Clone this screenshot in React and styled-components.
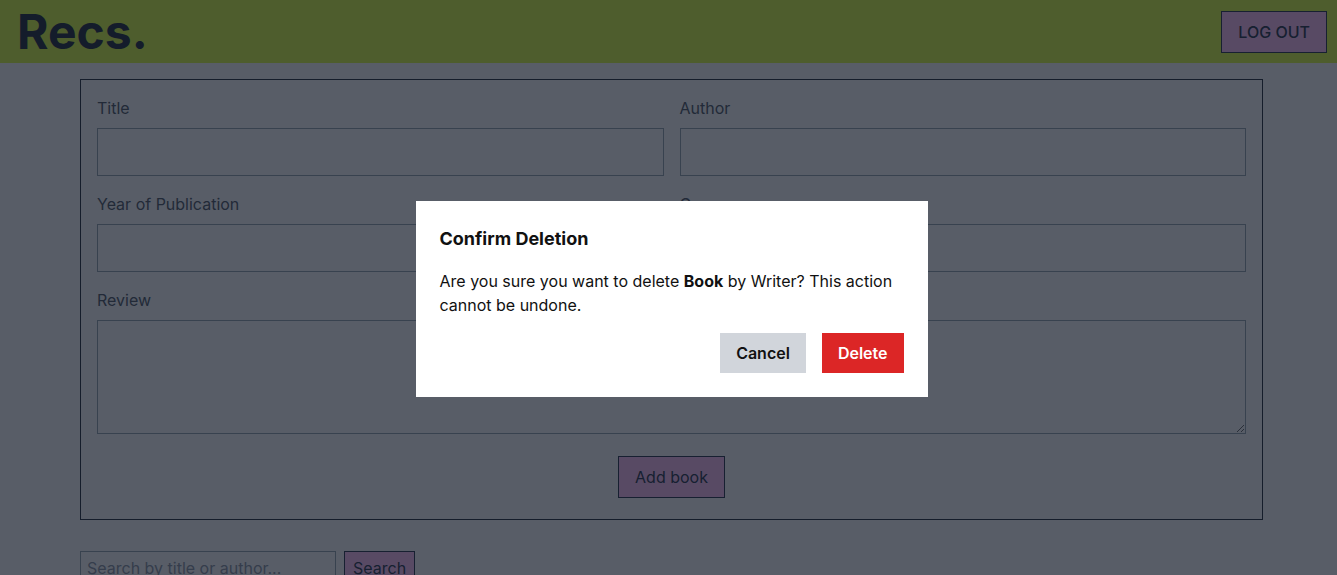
import styled, { createGlobalStyle } from 'styled-components';

const GlobalStyle = createGlobalStyle`
  body {
    margin: 0;
    font-family: Inter, "Noto Sans", sans-serif;
    background: #ffffff;
    color: #1f2937;
  }
  * {
    box-sizing: border-box;
  }
`;

const Header = styled.header`
  height: 63px;
  display: flex;
  justify-content: space-between;
  align-items: center;
  padding: 0 10px 0 17px;
  background: #dcff3c;
`;

const Logo = styled.h1`
  margin: 0;
  font-size: 48px;
  font-weight: 700;
  color: #1c2636;
  line-height: 1;
`;

const PillButton = styled.button`
  font-family: Inter, sans-serif;
  font-size: 16px;
  font-weight: ${(p) => (p.$caps ? 500 : 400)};
  text-transform: ${(p) => (p.$caps ? 'uppercase' : 'none')};
  color: #25324a;
  background: #ffc0f5;
  border: 1px solid #25324a;
  padding: ${(p) => p.$pad || '10px 16px'};
  line-height: 20px;
  cursor: pointer;
`;

const Main = styled.main`
  padding: 16px 74px 0 80px;
`;

const FormBox = styled.form`
  border: 1px solid #1f2937;
  padding: 16px 16px 21px;
  display: grid;
  grid-template-columns: 1fr 1fr;
  column-gap: 16px;
  row-gap: 16px;
`;

const Field = styled.div`
  display: flex;
  flex-direction: column;
  gap: 8px;
  grid-column: ${(p) => (p.$wide ? '1 / -1' : 'auto')};
`;

const Label = styled.label`
  font-size: 16px;
  line-height: 24px;
  color: #4b5563;
`;

const Input = styled.input`
  height: 48px;
  border: 1px solid #94a3ad;
  font-family: Inter, sans-serif;
  font-size: 16px;
  padding: 0 12px;
`;

const TextArea = styled.textarea`
  height: 114px;
  border: 1px solid #94a3ad;
  font-family: Inter, sans-serif;
  font-size: 16px;
  padding: 8px 12px;
  display: block;
`;

const Actions = styled.div`
  grid-column: 1 / -1;
  display: flex;
  justify-content: center;
  padding-top: 6px;
`;

const SearchRow = styled.div`
  display: flex;
  gap: 8px;
  margin-top: 31px;
`;

const SearchInput = styled.input`
  width: 256px;
  height: 34px;
  border: 1px solid #94a3ad;
  font-family: Inter, sans-serif;
  font-size: 16px;
  padding: 0 6px;
  &::placeholder {
    color: #8b95a3;
  }
`;

const Overlay = styled.div`
  position: fixed;
  inset: 0;
  background: rgba(17, 24, 39, 0.7);
  display: flex;
  align-items: center;
  justify-content: center;
  padding: 22px 0 0 6px;
`;

const Modal = styled.div`
  width: 512px;
  background: #ffffff;
  padding: 24px;
`;

const ModalTitle = styled.h2`
  margin: 0 0 16px;
  font-size: 18px;
  line-height: 28px;
  font-weight: 700;
  color: #111111;
`;

const ModalText = styled.p`
  margin: 0 0 16px;
  font-size: 16px;
  line-height: 24px;
  color: #111111;
`;

const ModalActions = styled.div`
  display: flex;
  justify-content: flex-end;
  gap: 16px;
`;

const ModalButton = styled.button`
  height: 40px;
  padding: 0 16px;
  border: none;
  font-family: Inter, sans-serif;
  font-size: 16px;
  font-weight: 600;
  color: ${(p) => (p.$danger ? '#ffffff' : '#111111')};
  background: ${(p) => (p.$danger ? '#dc2626' : '#d1d5db')};
  cursor: pointer;
`;

export default function App() {
  return (
    <>
      <GlobalStyle />
      <Header>
        <Logo>Recs.</Logo>
        <PillButton $caps>Log out</PillButton>
      </Header>
      <Main>
        <FormBox>
          <Field>
            <Label>Title</Label>
            <Input />
          </Field>
          <Field>
            <Label>Author</Label>
            <Input />
          </Field>
          <Field>
            <Label>Year of Publication</Label>
            <Input />
          </Field>
          <Field>
            <Label>Genre</Label>
            <Input />
          </Field>
          <Field $wide>
            <Label>Review</Label>
            <TextArea />
          </Field>
          <Actions>
            <PillButton type="button">Add book</PillButton>
          </Actions>
        </FormBox>
        <SearchRow>
          <SearchInput placeholder="Search by title or author..." />
          <PillButton type="button" $pad="6px 8px">Search</PillButton>
        </SearchRow>
      </Main>
      <Overlay>
        <Modal>
          <ModalTitle>Confirm Deletion</ModalTitle>
          <ModalText>
            Are you sure you want to delete <strong>Book</strong> by Writer? This action
            cannot be undone.
          </ModalText>
          <ModalActions>
            <ModalButton>Cancel</ModalButton>
            <ModalButton $danger>Delete</ModalButton>
          </ModalActions>
        </Modal>
      </Overlay>
    </>
  );
}
